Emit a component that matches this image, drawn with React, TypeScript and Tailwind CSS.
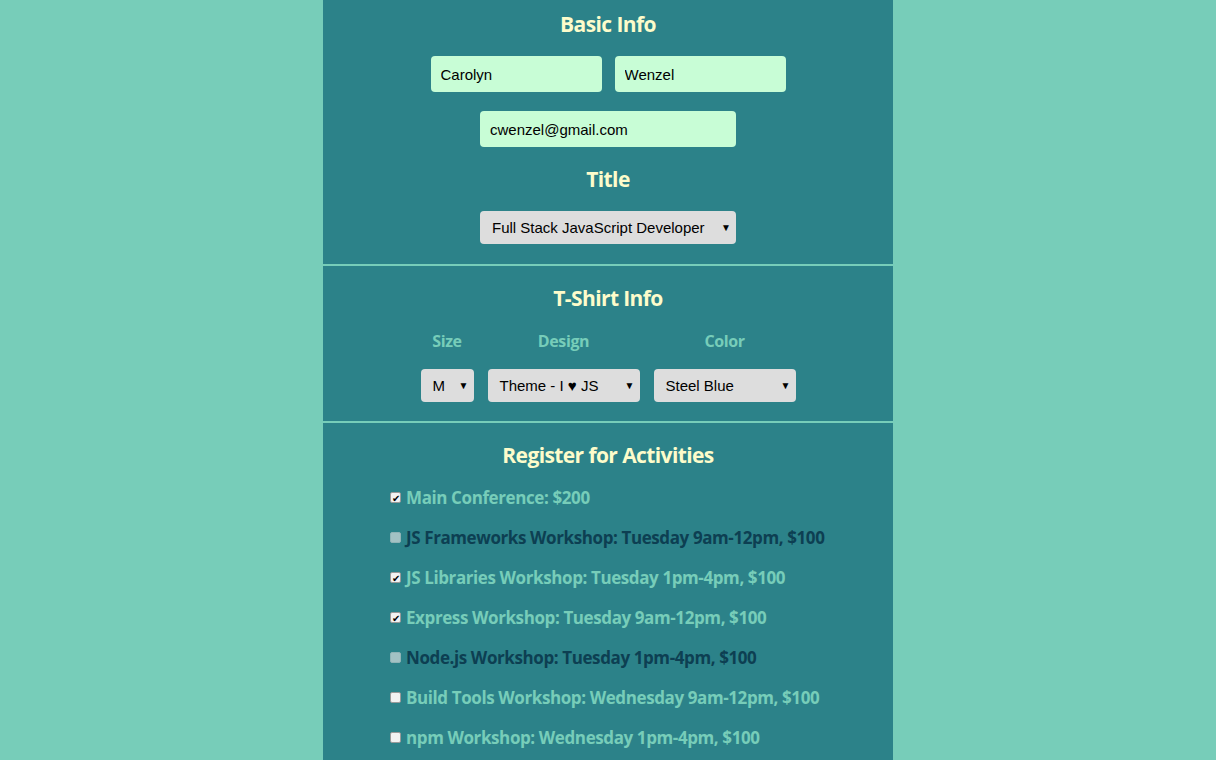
const activities = [
  { label: "Main Conference: $200", checked: true, disabled: false },
  { label: "JS Frameworks Workshop: Tuesday 9am-12pm, $100", checked: false, disabled: true },
  { label: "JS Libraries Workshop: Tuesday 1pm-4pm, $100", checked: true, disabled: false },
  { label: "Express Workshop: Tuesday 9am-12pm, $100", checked: true, disabled: false },
  { label: "Node.js Workshop: Tuesday 1pm-4pm, $100", checked: false, disabled: true },
  { label: "Build Tools Workshop: Wednesday 9am-12pm, $100", checked: false, disabled: false },
  { label: "npm Workshop: Wednesday 1pm-4pm, $100", checked: false, disabled: false },
];

function Heading({ children }: { children: React.ReactNode }) {
  return (
    <h2 className="text-center text-[21px] font-bold leading-none text-[#fdfccb] tracking-[-0.6px]">
      {children}
    </h2>
  );
}

function Select({ value, width }: { value: string; width: string }) {
  return (
    <div
      className={`${width} flex h-[33px] items-center justify-between rounded-[4px] bg-[#dddddd] pl-[12px] pr-[5px] font-['Liberation_Sans',Arial,sans-serif] text-[15px] text-black`}
    >
      <span className="pt-[1px]">{value}</span>
      <span className="text-[10px]">▼</span>
    </div>
  );
}

function Checkbox({ checked, disabled }: { checked: boolean; disabled: boolean }) {
  return (
    <span
      className={`flex h-[11px] w-[11px] items-center justify-center rounded-[2px] border ${
        disabled ? "border-[#8fb3b6] bg-[#a3c2c4]" : "border-[#9a9a9a] bg-[#f2f2f2]"
      }`}
    >
      {checked && <span className="text-[10px] leading-none text-black">✔</span>}
    </span>
  );
}

export default function App() {
  return (
    <div className="flex min-h-screen justify-center bg-[#77cdb9] font-['Open_Sans',sans-serif]">
      <form className="w-[570px] bg-[#2c8289]">
        <section className="flex flex-col items-center pt-[14px] pb-[20px]">
          <Heading>Basic Info</Heading>
          <div className="mt-[21px] flex gap-[13px]">
            <input
              readOnly
              value="Carolyn"
              className="h-[36px] w-[171px] rounded-[4px] bg-[#c8fdd6] px-[10px] font-['Liberation_Sans',Arial,sans-serif] text-[15px] text-black outline-none"
            />
            <input
              readOnly
              value="Wenzel"
              className="h-[36px] w-[171px] rounded-[4px] bg-[#c8fdd6] px-[10px] font-['Liberation_Sans',Arial,sans-serif] text-[15px] text-black outline-none"
            />
          </div>
          <input
            readOnly
            value="cwenzel@gmail.com"
            className="mt-[19px] h-[36px] w-[256px] rounded-[4px] bg-[#c8fdd6] px-[10px] font-['Liberation_Sans',Arial,sans-serif] text-[15px] text-black outline-none"
          />
          <div className="mt-[22px]">
            <Heading>Title</Heading>
          </div>
          <div className="mt-[21px]">
            <Select value="Full Stack JavaScript Developer" width="w-[256px]" />
          </div>
        </section>
        <div className="h-[2px] bg-[#77cdb9]" />
        <section className="flex flex-col items-center pt-[22px] pb-[19px]">
          <Heading>T-Shirt Info</Heading>
          <div className="mt-[20px] flex gap-[14px]">
            <div className="flex flex-col items-center gap-[16px]">
              <span className="text-[16px] font-bold tracking-[-0.4px] text-[#77cdb9]">Size</span>
              <Select value="M" width="w-[53px]" />
            </div>
            <div className="flex flex-col items-center gap-[16px]">
              <span className="text-[16px] font-bold tracking-[-0.4px] text-[#77cdb9]">Design</span>
              <Select value="Theme - I ♥ JS" width="w-[152px]" />
            </div>
            <div className="flex flex-col items-center gap-[16px]">
              <span className="text-[16px] font-bold tracking-[-0.4px] text-[#77cdb9]">Color</span>
              <Select value="Steel Blue" width="w-[142px]" />
            </div>
          </div>
        </section>
        <div className="h-[2px] bg-[#77cdb9]" />
        <section className="flex flex-col pt-[22px] pb-[20px]">
          <Heading>Register for Activities</Heading>
          <ul className="mt-[20px] flex flex-col gap-[17px] pl-[67px]">
            {activities.map((a) => (
              <li key={a.label} className="flex h-[23px] items-center gap-[5px]">
                <Checkbox checked={a.checked} disabled={a.disabled} />
                <span
                  className={`text-[17px] font-bold tracking-[-0.4px] ${
                    a.disabled ? "text-[#0d3f52]" : "text-[#77cdb9]"
                  }`}
                >
                  {a.label}
                </span>
              </li>
            ))}
          </ul>
        </section>
      </form>
    </div>
  );
}
